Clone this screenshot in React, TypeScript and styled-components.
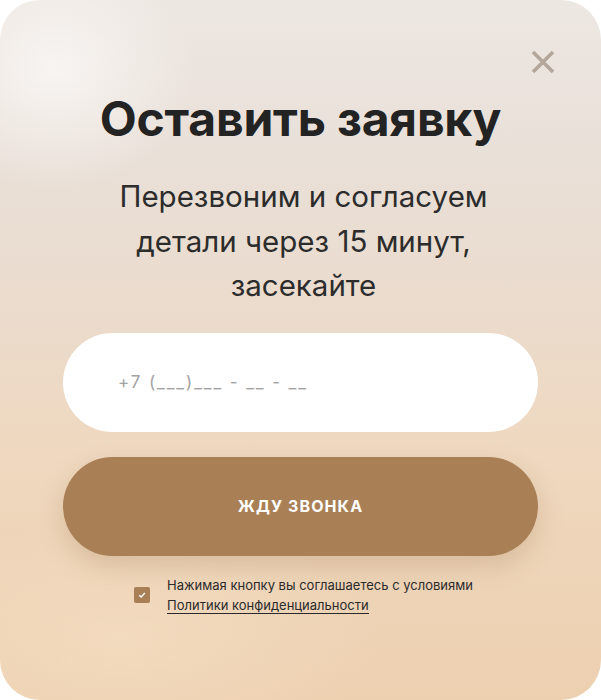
import React, { useState } from 'react';
import styled, { createGlobalStyle } from 'styled-components';

const GlobalStyle = createGlobalStyle`
  html, body {
    margin: 0;
    padding: 0;
    background: #ffffff;
  }
  * {
    box-sizing: border-box;
  }
`;

// Карточка модалки
const Card = styled.div`
  position: relative;
  width: 601px;
  height: 700px;
  border-radius: 40px;
  overflow: hidden;
  font-family: Inter, "Noto Sans", sans-serif;
  background:
    radial-gradient(ellipse 140px 120px at 55px 70px, rgba(250, 247, 245, 0.85), rgba(250, 247, 245, 0) 100%),
    radial-gradient(ellipse 260px 120px at 120px 640px, rgba(245, 222, 195, 0.7), rgba(245, 222, 195, 0) 100%),
    linear-gradient(180deg, #ede7e2 0%, #e9e0d8 22%, #ebdbcc 45%, #efd8bf 65%, #edd0b0 100%);
  display: flex;
  flex-direction: column;
  align-items: center;
  padding: 90px 63px 0;
`;

const CloseButton = styled.button`
  position: absolute;
  top: 48px;
  right: 44px;
  width: 28px;
  height: 28px;
  padding: 0;
  border: none;
  background: transparent;
  cursor: pointer;
  display: flex;
  align-items: center;
  justify-content: center;
`;

const Title = styled.h1`
  margin: 0;
  font-size: 48px;
  line-height: 58px;
  font-weight: 700;
  color: #232323;
  letter-spacing: -0.2px;
  text-align: center;
`;

const Subtitle = styled.p`
  margin: 26px 0 0 6px;
  font-size: 29.5px;
  line-height: 44.5px;
  font-weight: 400;
  color: #2c2c2c;
  text-align: center;
`;

const Form = styled.form`
  width: 100%;
  margin-top: 25px;
  display: flex;
  flex-direction: column;
  gap: 25px;
`;

const PhoneInput = styled.input`
  width: 100%;
  height: 99px;
  border: none;
  border-radius: 50px;
  background: #ffffff;
  padding: 0 0 0 55px;
  font-family: Inter, "Noto Sans", sans-serif;
  font-size: 17px;
  letter-spacing: 1.9px;
  color: #333;
  outline: none;

  &::placeholder {
    color: #a3a3a3;
  }
`;

const SubmitButton = styled.button`
  width: 100%;
  height: 99px;
  border: none;
  border-radius: 50px;
  background: #a97f55;
  box-shadow: 0 10px 24px rgba(150, 110, 70, 0.25);
  color: #ffffff;
  font-family: Inter, "Noto Sans", sans-serif;
  font-size: 16px;
  font-weight: 700;
  letter-spacing: 1.1px;
  cursor: pointer;
`;

const Agreement = styled.label`
  margin-top: 19px;
  display: flex;
  align-items: center;
  gap: 17px;
  padding-left: 6px;
  cursor: pointer;
`;

const Check = styled.span<{ checked: boolean }>`
  width: 16px;
  height: 16px;
  border-radius: 2px;
  background: ${(p) => (p.checked ? '#a97f55' : 'transparent')};
  border: ${(p) => (p.checked ? 'none' : '1px solid #a97f55')};
  display: flex;
  align-items: center;
  justify-content: center;
  flex-shrink: 0;
`;

const AgreementText = styled.span`
  font-size: 13px;
  line-height: 20px;
  color: #2a2a2a;
`;

const Link = styled.a`
  color: #2a2a2a;
  text-decoration: none;
  border-bottom: 1px solid #2a2a2a;
`;

const App: React.FC = () => {
  const [phone, setPhone] = useState('');
  const [agree, setAgree] = useState(true);

  return (
    <>
      <GlobalStyle />
      <Card>
        <CloseButton aria-label="Закрыть">
          <svg width="24" height="24" viewBox="0 0 24 24">
            <path d="M2 2 L22 22 M22 2 L2 22" stroke="#b3a79b" strokeWidth="3.6" strokeLinecap="butt" />
          </svg>
        </CloseButton>
        <Title>Оставить заявку</Title>
        <Subtitle>
          Перезвоним и согласуем
          <br />
          детали через 15 минут,
          <br />
          засекайте
        </Subtitle>
        <Form onSubmit={(e) => e.preventDefault()}>
          <PhoneInput
            type="tel"
            placeholder="+7 (___)___ - __ - __"
            value={phone}
            onChange={(e) => setPhone(e.target.value)}
          />
          <SubmitButton type="submit">ЖДУ ЗВОНКА</SubmitButton>
        </Form>
        <Agreement onClick={() => setAgree(!agree)}>
          <Check checked={agree}>
            {agree && (
              <svg width="8" height="8" viewBox="0 0 8 8">
                <path d="M1.2 4.2 L3.2 6 L6.8 2" stroke="#fff" strokeWidth="1.4" fill="none" />
              </svg>
            )}
          </Check>
          <AgreementText>
            Нажимая кнопку вы соглашаетесь с условиями
            <br />
            <Link href="#" onClick={(e) => e.preventDefault()}>Политики конфиденциальности</Link>
          </AgreementText>
        </Agreement>
      </Card>
    </>
  );
};

export default App;
